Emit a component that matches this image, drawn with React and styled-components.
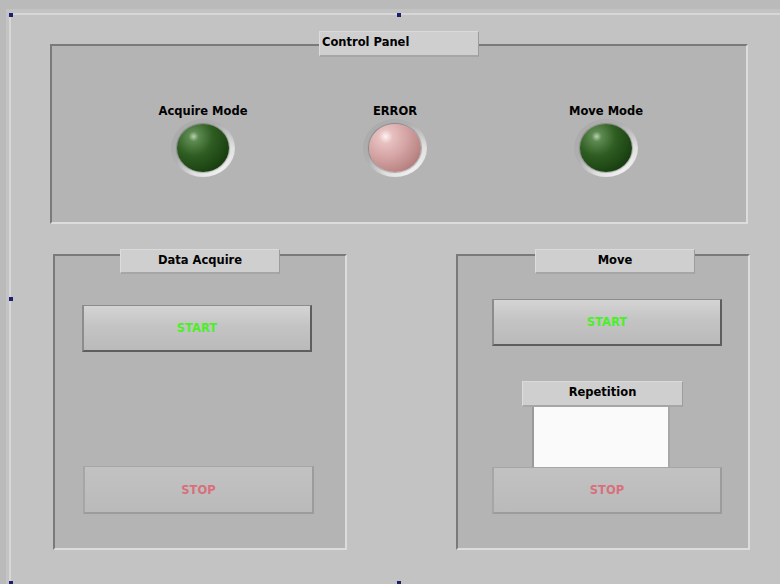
import React from 'react';
import styled, { createGlobalStyle } from 'styled-components';

const GlobalStyle = createGlobalStyle`
  html, body {
    margin: 0;
    padding: 0;
    background: #bababa;
  }
  * {
    box-sizing: border-box;
  }
`;

const Page = styled.div`
  position: relative;
  width: 780px;
  height: 584px;
  overflow: hidden;
  padding: 9px 0 0 6px;
  background: #bababa;
  font-family: "DejaVu Sans", Verdana, sans-serif;
`;

const Window = styled.div`
  height: 100%;
  padding: 4px 0 0 3px;
  background: #c3c3c3;
`;

const Canvas = styled.div`
  height: 100%;
  padding-top: 16px;
  border-top: 2px solid #d7d7d7;
  border-left: 2px solid #d7d7d7;
`;

const Handle = styled.span`
  position: absolute;
  left: ${p => p.$x}px;
  top: ${p => p.$y}px;
  width: 4px;
  height: 4px;
  background: #1c1f6e;
`;

const Group = styled.div`
  display: flex;
  flex-direction: column;
  width: ${p => p.$width}px;
  margin-left: ${p => p.$left || 0}px;
`;

const Caption = styled.div`
  position: relative;
  z-index: 1;
  width: ${p => p.$width}px;
  height: ${p => p.$height}px;
  margin-left: ${p => p.$left}px;
  margin-top: ${p => p.$top || 0}px;
  padding: 3px ${p => (p.$align === 'left' ? '0 0 2px' : '0')};
  background: #cfcfcf;
  border-top: 1px solid #dadada;
  border-left: 1px solid #dcdcdc;
  border-right: 1px solid #9c9c9c;
  border-bottom: 2px solid #a6a6a6;
  color: #000;
  font-size: 11.5px;
  font-weight: bold;
  line-height: 14px;
  text-align: ${p => p.$align || 'center'};
`;

const Box = styled.div`
  display: flex;
  flex-direction: ${p => p.$row ? 'row' : 'column'};
  align-items: flex-start;
  height: ${p => p.$height}px;
  margin-top: ${p => p.$overlap}px;
  padding-top: ${p => p.$pad}px;
  background: #b4b4b4;
  border-top: 2px solid #7a7a7a;
  border-left: 2px solid #7a7a7a;
  border-right: 2px solid #dcdcdc;
  border-bottom: 2px solid #dcdcdc;
`;

const Indicator = styled.div`
  display: flex;
  flex-direction: column;
  align-items: center;
  width: 120px;
  margin-left: ${p => p.$left}px;
`;

const IndicatorLabel = styled.div`
  font-size: 11.5px;
  font-weight: bold;
  line-height: 14px;
  color: #000;
`;

const Bezel = styled.div`
  display: flex;
  align-items: center;
  justify-content: center;
  width: 64px;
  height: 58px;
  margin-top: 1px;
  border-radius: 50%;
  background: radial-gradient(ellipse at 70% 78%, #f4f4f4 0%, #e0e0e0 38%, #b0b0b0 62%, #a6a6a6 100%);
`;

const Lamp = styled.div`
  width: 52px;
  height: 48px;
  border-radius: 50%;
  background: ${p => p.$on
    ? 'radial-gradient(ellipse at 32% 26%, #b8d0b0 0%, #5d8a50 10%, #2f5d22 38%, #1c4413 70%, #0d2407 100%)'
    : 'radial-gradient(ellipse at 32% 26%, #fff2f2 0%, #e7c0c0 14%, #d5a4a4 42%, #b88282 75%, #7a5050 100%)'};
  box-shadow: 0 0 1px 1px rgba(60, 60, 60, 0.35);
`;

const BottomRow = styled.div`
  display: flex;
  gap: 109px;
  margin-top: 25px;
  padding-left: 42px;
`;

const PanelButton = styled.div`
  display: flex;
  align-items: center;
  justify-content: center;
  width: ${p => p.$width}px;
  height: ${p => p.$height}px;
  margin-left: ${p => p.$left}px;
  margin-top: ${p => p.$top || 0}px;
  font-size: 11.5px;
  font-weight: bold;
  color: ${p => p.$stop ? '#d8707c' : '#4cee2a'};
  background: ${p => p.$stop
    ? 'linear-gradient(#c2c2c2, #bababa)'
    : 'linear-gradient(#d4d4d4, #c4c4c4 45%, #bababa)'};
  border-top: 1px solid ${p => p.$stop ? '#a6a6a6' : '#8c8c8c'};
  border-left: 2px solid ${p => p.$stop ? '#a6a6a6' : '#8c8c8c'};
  border-right: 2px solid ${p => p.$stop ? '#9c9c9c' : '#5e5e5e'};
  border-bottom: 2px solid ${p => p.$stop ? '#9c9c9c' : '#5e5e5e'};
`;

const CountField = styled.div`
  width: 138px;
  height: 60px;
  margin-left: 74px;
  background: #fafafa;
  border-left: 2px solid #9a9a9a;
  border-right: 2px solid #a8a8a8;
`;

export default function App() {
  return (
    <>
      <GlobalStyle />
      <Page>
        <Window>
          <Canvas>
            <Group $width={698} $left={39}>
              <Caption $width={160} $height={26} $left={269} $align="left">Control Panel</Caption>
              <Box $row $height={180} $overlap={-13} $pad={58}>
                <Indicator $left={91}>
                  <IndicatorLabel>Acquire Mode</IndicatorLabel>
                  <Bezel><Lamp $on /></Bezel>
                </Indicator>
                <Indicator $left={72}>
                  <IndicatorLabel>ERROR</IndicatorLabel>
                  <Bezel><Lamp /></Bezel>
                </Indicator>
                <Indicator $left={91}>
                  <IndicatorLabel>Move Mode</IndicatorLabel>
                  <Bezel><Lamp $on /></Bezel>
                </Indicator>
              </Box>
            </Group>

            <BottomRow>
              <Group $width={294}>
                <Caption $width={160} $height={25} $left={67}>Data Acquire</Caption>
                <Box $height={296} $overlap={-20} $pad={49}>
                  <PanelButton $width={230} $height={47} $left={27}>START</PanelButton>
                  <PanelButton $stop $width={231} $height={48} $left={28} $top={114}>STOP</PanelButton>
                </Box>
              </Group>

              <Group $width={294}>
                <Caption $width={160} $height={25} $left={79}>Move</Caption>
                <Box $height={296} $overlap={-20} $pad={43}>
                  <PanelButton $width={230} $height={47} $left={34}>START</PanelButton>
                  <Caption $width={161} $height={26} $left={64} $top={35}>Repetition</Caption>
                  <CountField />
                  <PanelButton $stop $width={230} $height={47} $left={34}>STOP</PanelButton>
                </Box>
              </Group>
            </BottomRow>
          </Canvas>
        </Window>
        <Handle $x={9} $y={13} />
        <Handle $x={397} $y={13} />
        <Handle $x={9} $y={297} />
        <Handle $x={9} $y={581} />
        <Handle $x={397} $y={581} />
      </Page>
    </>
  );
}
